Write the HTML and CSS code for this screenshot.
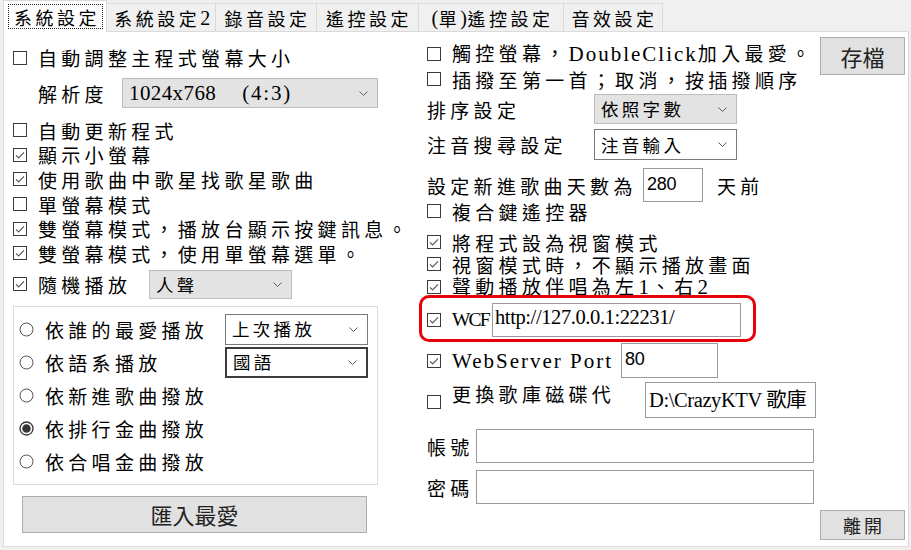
FILE: index.html
```html
<!DOCTYPE html>
<html lang="zh-Hant">
<head>
<meta charset="utf-8">
<title>系統設定</title>
<link rel="stylesheet" href="styles.css">
</head>
<body>
<div class="win">
  <div class="tabs">
    <div class="tab sel w1"><span class="focus">系統設定</span></div>
    <div class="tab w2">系統設定<span class="lt">2</span></div>
    <div class="tab w3">錄音設定</div>
    <div class="tab w4">遙控設定</div>
    <div class="tab w5"><span class="lt">(</span>單<span class="lt">)</span>遙控設定</div>
    <div class="tab w6">音效設定</div>
  </div>

  <div class="panel">
    <!-- LEFT COLUMN -->
    <div class="left">
      <div class="row l-r1">
        <span class="cb"><svg viewBox="0 0 14 14"><rect x=".5" y=".5" width="13" height="13"/></svg></span>
        <span class="txt">自動調整主程式螢幕大小</span>
      </div>

      <div class="row l-res">
        <span class="txt lbl-res">解析度</span>
        <div class="combo gray c-res"><span class="ct serifc"><span>1024x768</span><span class="ratio">(4:3)</span></span><svg class="chev" viewBox="0 0 9 5"><path d="M.5.5l4 4 4-4"/></svg></div>
      </div>

      <div class="l-list">
        <div class="row lrow">
          <span class="cb"><svg viewBox="0 0 14 14"><rect x=".5" y=".5" width="13" height="13"/></svg></span>
          <span class="txt">自動更新程式</span>
        </div>
        <div class="row lrow">
          <span class="cb"><svg viewBox="0 0 14 14"><rect x=".5" y=".5" width="13" height="13"/><path class="ck" d="M3 7.3l2.6 2.6L11 4.3"/></svg></span>
          <span class="txt">顯示小螢幕</span>
        </div>
        <div class="row lrow">
          <span class="cb"><svg viewBox="0 0 14 14"><rect x=".5" y=".5" width="13" height="13"/><path class="ck" d="M3 7.3l2.6 2.6L11 4.3"/></svg></span>
          <span class="txt">使用歌曲中歌星找歌星歌曲</span>
        </div>
        <div class="row lrow">
          <span class="cb"><svg viewBox="0 0 14 14"><rect x=".5" y=".5" width="13" height="13"/></svg></span>
          <span class="txt">單螢幕模式</span>
        </div>
        <div class="row lrow">
          <span class="cb"><svg viewBox="0 0 14 14"><rect x=".5" y=".5" width="13" height="13"/><path class="ck" d="M3 7.3l2.6 2.6L11 4.3"/></svg></span>
          <span class="txt">雙螢幕模式，播放台顯示按鍵訊息。</span>
        </div>
        <div class="row lrow">
          <span class="cb"><svg viewBox="0 0 14 14"><rect x=".5" y=".5" width="13" height="13"/><path class="ck" d="M3 7.3l2.6 2.6L11 4.3"/></svg></span>
          <span class="txt">雙螢幕模式，使用單螢幕選單。</span>
        </div>
      </div>

      <div class="row l-rand">
        <span class="cb"><svg viewBox="0 0 14 14"><rect x=".5" y=".5" width="13" height="13"/><path class="ck" d="M3 7.3l2.6 2.6L11 4.3"/></svg></span>
        <span class="txt lbl-rand">隨機播放</span>
        <div class="combo gray c-rand"><span class="ct">人聲</span><svg class="chev" viewBox="0 0 9 5"><path d="M.5.5l4 4 4-4"/></svg></div>
      </div>

      <div class="group">
        <div class="row grow">
          <svg class="rd" viewBox="0 0 15 15"><circle cx="7.5" cy="7.5" r="6.5"/></svg>
          <span class="txt">依誰的最愛播放</span>
          <div class="combo white c-grp"><span class="ct">上次播放</span><svg class="chev" viewBox="0 0 9 5"><path d="M.5.5l4 4 4-4"/></svg></div>
        </div>
        <div class="row grow">
          <svg class="rd" viewBox="0 0 15 15"><circle cx="7.5" cy="7.5" r="6.5"/></svg>
          <span class="txt">依語系播放</span>
          <div class="combo dark c-grp"><span class="ct">國語</span><svg class="chev" viewBox="0 0 9 5"><path d="M.5.5l4 4 4-4"/></svg></div>
        </div>
        <div class="row grow">
          <svg class="rd" viewBox="0 0 15 15"><circle cx="7.5" cy="7.5" r="6.5"/></svg>
          <span class="txt">依新進歌曲撥放</span>
        </div>
        <div class="row grow">
          <svg class="rd on" viewBox="0 0 15 15"><circle cx="7.5" cy="7.5" r="6.5"/><circle class="dot" cx="7.5" cy="7.5" r="3.6"/></svg>
          <span class="txt">依排行金曲撥放</span>
        </div>
        <div class="row grow">
          <svg class="rd" viewBox="0 0 15 15"><circle cx="7.5" cy="7.5" r="6.5"/></svg>
          <span class="txt">依合唱金曲撥放</span>
        </div>
      </div>

      <div class="btn b-import">匯入最愛</div>
    </div>

    <!-- RIGHT COLUMN -->
    <div class="right">
      <div class="r-top">
        <div class="r-stack">
          <div class="row r1">
            <span class="cb"><svg viewBox="0 0 14 14"><rect x=".5" y=".5" width="13" height="13"/></svg></span>
            <span class="txt">觸控螢幕，<span class="lat">DoubleClick</span>加入最愛。</span>
          </div>
          <div class="row r2">
            <span class="cb"><svg viewBox="0 0 14 14"><rect x=".5" y=".5" width="13" height="13"/></svg></span>
            <span class="txt">插撥至第一首；取消，按插撥順序</span>
          </div>
        </div>
        <div class="btn b-save">存檔</div>
      </div>

      <div class="row r3">
        <span class="txt lbl-r">排序設定</span>
        <div class="combo gray c-r"><span class="ct">依照字數</span><svg class="chev" viewBox="0 0 9 5"><path d="M.5.5l4 4 4-4"/></svg></div>
      </div>
      <div class="row r4">
        <span class="txt lbl-r">注音搜尋設定</span>
        <div class="combo white c-r"><span class="ct">注音輸入</span><svg class="chev" viewBox="0 0 9 5"><path d="M.5.5l4 4 4-4"/></svg></div>
      </div>
      <div class="row r5">
        <span class="txt lbl-days">設定新進歌曲天數為</span>
        <div class="tb tb-days"><span class="sans">280</span></div>
        <span class="txt days-unit">天前</span>
      </div>
      <div class="row r6">
        <span class="cb"><svg viewBox="0 0 14 14"><rect x=".5" y=".5" width="13" height="13"/></svg></span>
        <span class="txt">複合鍵遙控器</span>
      </div>
      <div class="row r7">
        <span class="cb"><svg viewBox="0 0 14 14"><rect x=".5" y=".5" width="13" height="13"/><path class="ck" d="M3 7.3l2.6 2.6L11 4.3"/></svg></span>
        <span class="txt">將程式設為視窗模式</span>
      </div>
      <div class="row r8">
        <span class="cb"><svg viewBox="0 0 14 14"><rect x=".5" y=".5" width="13" height="13"/><path class="ck" d="M3 7.3l2.6 2.6L11 4.3"/></svg></span>
        <span class="txt">視窗模式時，不顯示播放畫面</span>
      </div>
      <div class="row r9">
        <span class="cb"><svg viewBox="0 0 14 14"><rect x=".5" y=".5" width="13" height="13"/><path class="ck" d="M3 7.3l2.6 2.6L11 4.3"/></svg></span>
        <span class="txt">聲動播放伴唱為左<span class="lat">1</span>、右<span class="lat">2</span></span>
      </div>
      <div class="row r-wcf">
        <span class="cb"><svg viewBox="0 0 14 14"><rect x=".5" y=".5" width="13" height="13"/><path class="ck" d="M3 7.3l2.6 2.6L11 4.3"/></svg></span>
        <span class="lat wcf">WCF</span>
        <div class="tb tb-wcf"><span class="serif">http://127.0.0.1:22231/</span></div>
        <div class="highlight"></div>
      </div>
      <div class="row r-web">
        <span class="cb"><svg viewBox="0 0 14 14"><rect x=".5" y=".5" width="13" height="13"/><path class="ck" d="M3 7.3l2.6 2.6L11 4.3"/></svg></span>
        <span class="txt lbl-web"><span class="lat">WebServer Port</span></span>
        <div class="tb tb-port"><span class="sans">80</span></div>
      </div>
      <div class="row r-chg">
        <span class="cb cb-low"><svg viewBox="0 0 14 14"><rect x=".5" y=".5" width="13" height="13"/></svg></span>
        <span class="txt lbl-chg">更換歌庫磁碟代</span>
        <div class="tb tb-dir"><span class="serif">D:\CrazyKTV 歌庫</span></div>
      </div>
      <div class="row r-acct">
        <span class="txt lbl-acct">帳號</span>
        <div class="tb tb-acct"></div>
      </div>
      <div class="row r-pw">
        <span class="txt lbl-acct">密碼</span>
        <div class="tb tb-acct"></div>
      </div>
      <div class="btn b-exit">離開</div>
    </div>
  </div>
</div>
</body>
</html>
```

FILE: styles.css
```css
* { box-sizing: border-box; }

html, body {
  margin: 0;
  padding: 0;
  background: #f0f0f0;
}

body {
  width: 911px;
  height: 550px;
  overflow: hidden;
  font-family: "Noto Sans CJK TC", "Noto Sans", sans-serif;
  color: #000;
}

.win {
  width: 911px;
  height: 550px;
}

/* ---------- tabs ---------- */
.tabs {
  display: flex;
  align-items: flex-end;
  height: 31px;
  padding-left: 3px;
  position: relative;
  z-index: 1;
}

.tab {
  height: 28px;
  display: flex;
  align-items: center;
  justify-content: center;
  background: #f0f0f0;
  border: 1px solid #dadada;
  border-bottom: none;
  margin-left: -1px;
  font-size: 18px;
  letter-spacing: 3.5px;
  line-height: 1;
  white-space: nowrap;
  padding-left: 3px;
}

.tab.sel {
  height: 32px;
  margin-bottom: -1px;
  margin-left: 0;
  background: #fff;
  padding: 3px 3px 3px 4px;
  align-items: stretch;
}

.focus {
  flex: 1;
  display: flex;
  align-items: center;
  justify-content: center;
  outline: 1px dotted #222;
  outline-offset: -1px;
  padding-left: 3px;
}

.lt {
  font-family: "Liberation Serif", serif;
  font-size: 20px;
  letter-spacing: 0.5px;
}

.w1 { width: 104px; }
.w2 { width: 110px; }
.w3 { width: 102px; }
.w4 { width: 103px; }
.w5 { width: 146px; }
.w6 { width: 100px; }

/* ---------- panel ---------- */
.panel {
  margin-left: 3px;
  width: 906px;
  height: 516px;
  border: 1px solid #dadada;
  background: #fff;
  display: flex;
}

.row {
  display: flex;
  align-items: center;
  white-space: nowrap;
}

.txt {
  font-size: 19px;
  letter-spacing: 4.3px;
  line-height: 1;
}

.lat {
  font-family: "Liberation Serif", serif;
  font-size: 21px;
  letter-spacing: 2px;
  line-height: 1;
}

.lat.wcf {
  font-size: 19.5px;
  letter-spacing: -1.8px;
  width: 40px;
  flex: none;
}

.serif {
  font-family: "Liberation Serif", "Noto Sans CJK TC", serif;
  font-size: 20.5px;
  letter-spacing: -0.4px;
  line-height: 1;
}

.sans {
  font-family: "Liberation Sans", sans-serif;
  font-size: 18px;
  letter-spacing: -0.3px;
  line-height: 1;
}

/* checkbox */
.cb {
  width: 14px;
  height: 14px;
  flex: none;
  margin-right: 11px;
  display: block;
}
.cb svg { display: block; width: 14px; height: 14px; }
.cb rect { fill: #fff; stroke: #3a3a3a; stroke-width: 1; }
.cb .ck { fill: none; stroke: #5a5a5a; stroke-width: 1.2; }

/* radio */
.rd {
  width: 15px;
  height: 15px;
  flex: none;
  margin-right: 11px;
  display: block;
}
.rd circle { fill: #fff; stroke: #555; stroke-width: 1; }
.rd.on circle { stroke: #333; stroke-width: 1.3; }
.rd .dot { fill: #333; stroke: none; }

/* combo */
.combo {
  display: flex;
  align-items: center;
  justify-content: space-between;
  padding: 0 9px 0 6px;
  flex: none;
}
.combo .ct {
  font-size: 17.5px;
  letter-spacing: 3.3px;
  line-height: 1;
}
.combo .ct.serifc {
  font-family: "Liberation Serif", serif;
  font-size: 21px;
  letter-spacing: 0.4px;
  display: flex;
  align-items: baseline;
}
.ratio {
  margin-left: 26px;
  letter-spacing: 1.8px;
}
.combo.gray { background: #e3e3e3; border: 1px solid #bdbdbd; }
.combo.white { background: #fff; border: 1px solid #7a7a7a; }
.combo.dark { background: #fff; border: 2px solid #3c3c3c; }
.chev {
  width: 9px;
  height: 5px;
  flex: none;
}
.chev path { fill: none; stroke: #5a5a5a; stroke-width: 1; }

/* textbox */
.tb {
  background: #fff;
  border: 1px solid #9a9a9a;
  display: flex;
  align-items: center;
  padding-left: 3px;
  flex: none;
  white-space: nowrap;
  overflow: hidden;
}

/* button */
.btn {
  background: #e1e1e1;
  border: 1px solid #adadad;
  display: flex;
  align-items: center;
  justify-content: center;
  font-size: 22px;
  line-height: 1;
  color: #222;
  flex: none;
}

/* ---------- left column ---------- */
.left {
  width: 406px;
  flex: none;
  padding-left: 9px;
  display: flex;
  flex-direction: column;
}

.l-r1 { margin-top: 13px; height: 25px; }

.l-res { margin-top: 8px; height: 30px; }
.lbl-res { padding-left: 25px; width: 109px; }
.c-res { width: 256px; height: 30px; }

.l-list { margin-top: 10px; display: flex; flex-direction: column; }
.lrow { height: 24.6px; }

.l-rand { margin-top: 4.4px; height: 29px; }
.lbl-rand { width: 111px; }
.c-rand { width: 143px; height: 29px; }

.group {
  margin-top: 7px;
  width: 365px;
  height: 179px;
  border: 1px solid #dcdcdc;
  padding: 5.5px 9px 0 5px;
  display: flex;
  flex-direction: column;
}
.grow { height: 33.2px; }
.c-grp { margin-left: auto; width: 143px; height: 31px; }

.b-import {
  margin-top: 11px;
  margin-left: 9px;
  width: 345px;
  height: 37px;
}

/* ---------- right column ---------- */
.right {
  flex: 1;
  padding-left: 17px;
  padding-right: 3px;
  display: flex;
  flex-direction: column;
}

.r-top { display: flex; align-items: flex-start; }
.r-stack { flex: 1; display: flex; flex-direction: column; }
.r1 { margin-top: 10px; height: 24px; }
.r2 { height: 26px; }

.b-save {
  margin-top: 5px;
  width: 85px;
  height: 38px;
}

.r3 { margin-top: 2px; height: 30px; }
.r4 { margin-top: 5px; height: 31px; }
.lbl-r { width: 167px; }
.r3 .c-r { width: 143px; height: 30px; }
.r4 .c-r { width: 143px; height: 31px; }

.r5 { margin-top: 8px; height: 34px; }
.lbl-days { width: 216px; }
.tb-days { width: 60px; height: 34px; align-items: flex-start; padding-top: 6px; }
.days-unit { margin-left: 14px; }

.r6 { height: 18px; }
.r7 { margin-top: 10px; height: 24px; }
.r8 { height: 20px; }
.r9 { height: 26px; }

.r-wcf { margin-top: 3px; height: 34px; position: relative; }
.tb-wcf { width: 249px; height: 34px; padding-bottom: 5px; padding-left: 2px; }

.highlight {
  position: absolute;
  left: -8px;
  top: -8px;
  width: 337px;
  height: 47px;
  border: 3px solid #e8000b;
  border-radius: 10px;
  pointer-events: none;
}

.r-web { margin-top: 6px; height: 35px; }
.lbl-web { width: 169px; }
.tb-port { width: 97px; height: 35px; padding-bottom: 3px; }

.r-chg { margin-top: 4px; height: 36px; }
.cb-low { margin-top: 4px; }
.lbl-chg { width: 193px; margin-bottom: 14px; }
.tb-dir { width: 171px; height: 36px; }

.r-acct { margin-top: 11px; height: 34px; }
.r-pw { margin-top: 7px; height: 34px; }
.lbl-acct { width: 49px; }
.tb-acct { width: 338px; height: 34px; }

.b-exit {
  margin-top: 6px;
  align-self: flex-end;
  width: 85px;
  height: 30px;
  font-size: 18px;
  letter-spacing: 3px;
  padding-left: 3px;
}
```
